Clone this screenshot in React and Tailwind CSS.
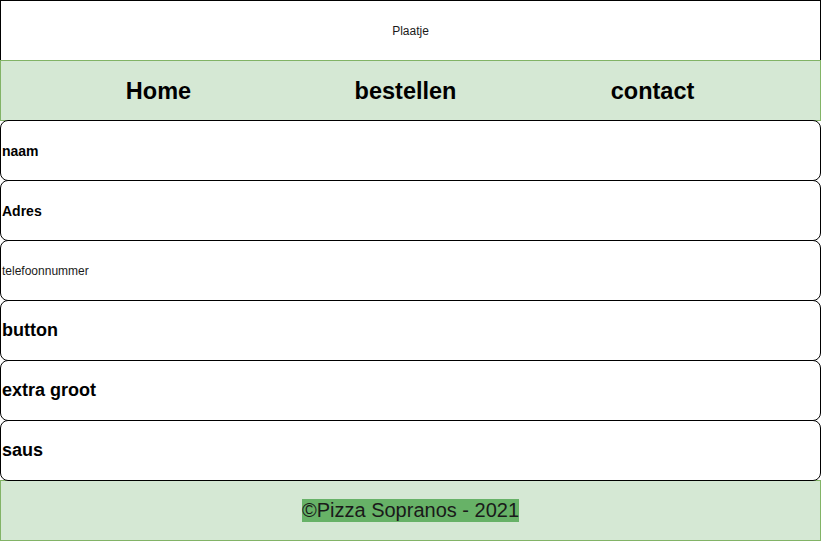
import React from "react";

const rows = [
  { label: "naam", className: "pt-px text-[14px] font-bold" },
  { label: "Adres", className: "pt-px text-[14px] font-bold" },
  { label: "telefoonnummer", className: "pt-px text-[12px] text-[#1a1a1a]" },
  { label: "button", className: "text-[18px] font-bold" },
  { label: "extra groot", className: "text-[18px] font-bold" },
  { label: "saus", className: "text-[18px] font-bold" },
];

const App = () => {
  return (
    <div className="w-[821px] bg-white text-black font-['Liberation_Sans',Arial,sans-serif]">
      {/* image placeholder */}
      <div className="h-[61px] border border-black flex items-center justify-center">
        <span className="text-[12px] text-[#1a1a1a]">Plaatje</span>
      </div>

      {/* nav */}
      <nav className="-mt-px h-[61px] border border-[#82b366] bg-[#d5e8d4] grid grid-cols-[247px_247px_247px] pl-[34px] pt-[2px] items-center text-center text-[23.5px] font-bold">
        <span>Home</span>
        <span>bestellen</span>
        <span>contact</span>
      </nav>

      {/* form fields */}
      {rows.map(({ label, className }) => (
        <div
          key={label}
          className="relative -mt-px h-[61px] rounded-lg border border-black bg-white flex items-center pl-px"
        >
          <span className={className}>{label}</span>
        </div>
      ))}

      <footer className="-mt-px h-[61px] border border-[#82b366] bg-[#d5e8d4] flex items-center justify-center">
        <span className="text-[20px] leading-[23px] bg-[#67b267] text-[#1a1a1a]">
          ©Pizza Sopranos - 2021
        </span>
      </footer>
    </div>
  );
};

export default App;
